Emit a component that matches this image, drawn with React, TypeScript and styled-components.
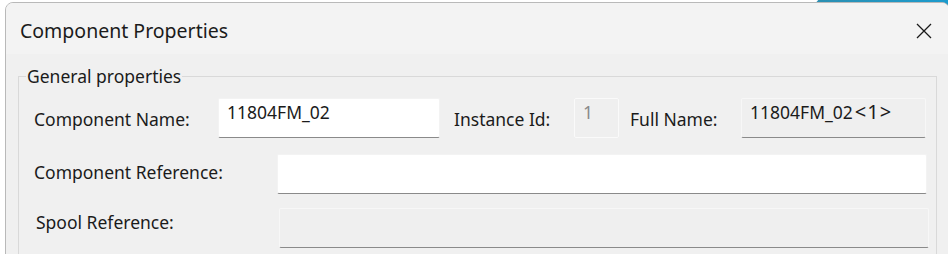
import styled, { createGlobalStyle } from "styled-components";

const GlobalStyle = createGlobalStyle`
  html, body {
    margin: 0;
    padding: 0;
    background: #ffffff;
    overflow: hidden;
  }
  body {
    font-family: "Noto Sans", "Open Sans", sans-serif;
  }
`;

const App = () => {
  return (
    <StPage>
      <GlobalStyle />
      <StDesktop />
      <StWindow>
        <StTitleBar>
          <StTitle>Component Properties</StTitle>
          <StClose aria-label="close">
            <svg width="16" height="16" viewBox="0 0 16 16">
              <path d="M1 1 L15 15 M15 1 L1 15" stroke="#1a1a1a" strokeWidth="1.3" fill="none" />
            </svg>
          </StClose>
        </StTitleBar>
        <StBody>
          <StGroup>
            <StLegend>General properties</StLegend>
            <StRowOne>
              <StLabel $top={11}>Component Name:</StLabel>
              <StField>11804FM_02</StField>
              <StLabel $top={11} $indent={14}>Instance Id:</StLabel>
              <StField $variant="disabled">1</StField>
              <StLabel $top={11} $indent={11}>Full Name:</StLabel>
              <StField $variant="readonly">
                11804FM_02<StSuffix>&lt;1&gt;</StSuffix>
              </StField>
            </StRowOne>
            <StRowWide $gap={16}>
              <StLabel $top={8}>Component Reference:</StLabel>
              <StField />
            </StRowWide>
            <StRowWide $gap={14} $shift={2}>
              <StLabel $top={4}>Spool Reference:</StLabel>
              <StField $variant="readonly" />
            </StRowWide>
          </StGroup>
        </StBody>
      </StWindow>
    </StPage>
  );
};

export default App;

const StPage = styled.div`
  position: relative;
  width: 948px;
  height: 254px;
  padding: 2px 0 0 5px;
  box-sizing: border-box;
  overflow: hidden;
`;

const StDesktop = styled.div`
  position: absolute;
  top: 0;
  left: 814px;
  width: 140px;
  height: 5px;
  background: linear-gradient(90deg, #2b8fb2, #1b9ccf);
  transform: skewX(-40deg);
  transform-origin: bottom left;
`;

const StWindow = styled.div`
  position: relative;
  width: 945px;
  height: 262px;
  background: #f0f0f0;
  border: 1px solid #b9b9b9;
  border-radius: 8px 8px 0 0;
  box-sizing: border-box;
  overflow: hidden;
`;

const StTitleBar = styled.div`
  display: flex;
  align-items: center;
  justify-content: space-between;
  height: 51px;
  padding: 0 0 0 14px;
  background: #f3f3f3;
`;

const StTitle = styled.span`
  font-size: 19.5px;
  line-height: 24px;
  color: #1b1b1b;
  margin-top: 4px;
`;

const StClose = styled.div`
  display: flex;
  align-items: center;
  justify-content: center;
  width: 16px;
  height: 16px;
  margin-right: 17px;
  margin-top: 4px;
`;

const StBody = styled.div`
  padding: 12px 0 0 12px;
`;

const StGroup = styled.fieldset`
  width: 919px;
  height: 200px;
  margin: 0;
  padding: 12px 0 0 0;
  border: 1px solid #d9d9d9;
  border-bottom: none;
  box-sizing: border-box;
`;

const StLegend = styled.legend`
  margin-left: 7px;
  padding: 0 1px;
  font-size: 17.5px;
  line-height: 20px;
  color: #1b1b1b;
`;

const StRowOne = styled.div`
  display: grid;
  grid-template-columns: 184px 222px 134px 45px 122px 185px;
  align-items: start;
  height: 40px;
  padding-left: 15px;
`;

const StRowWide = styled.div<{ $gap: number; $shift?: number }>`
  display: grid;
  grid-template-columns: 243px 650px;
  align-items: start;
  height: 40px;
  margin-top: ${({ $gap }) => $gap}px;
  padding-left: ${({ $shift }) => 15 + ($shift ?? 0)}px;
`;

const StLabel = styled.span<{ $top: number; $indent?: number }>`
  padding-top: ${({ $top }) => $top}px;
  padding-left: ${({ $indent }) => $indent ?? 0}px;
  font-size: 17.5px;
  line-height: 20px;
  color: #1b1b1b;
  white-space: nowrap;
`;

const StField = styled.div<{ $variant?: "disabled" | "readonly" }>`
  box-sizing: border-box;
  height: 40px;
  padding: 2px 8px 0 8px;
  font-size: 17.5px;
  line-height: 22px;
  white-space: nowrap;
  color: ${({ $variant }) => ($variant === "disabled" ? "#8a8a8a" : "#1b1b1b")};
  background: ${({ $variant }) => ($variant ? "#efefef" : "#ffffff")};
  border: 1px solid
    ${({ $variant }) => ($variant === "disabled" ? "#fafafa" : $variant ? "#f7f7f7" : "#f3f3f3")};
  border-bottom: 1px solid
    ${({ $variant }) => ($variant === "disabled" ? "#fafafa" : "#8a8a8a")};
  border-radius: 2px;
`;

const StSuffix = styled.span`
  margin-left: 2px;
  font-size: 20px;
  letter-spacing: 1px;
`;
